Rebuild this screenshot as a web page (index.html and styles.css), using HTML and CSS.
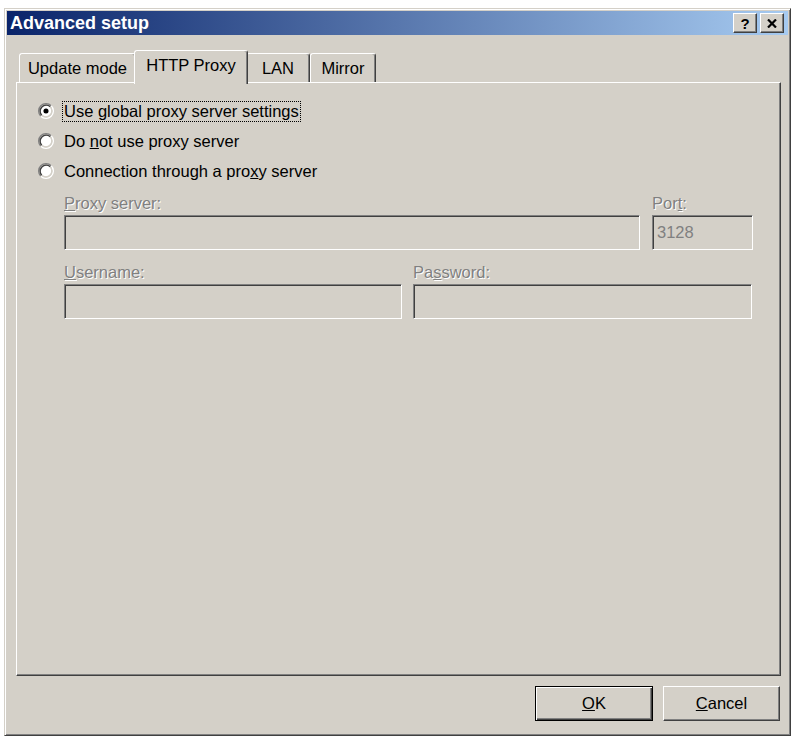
FILE: index.html
```html
<!DOCTYPE html>
<html>
<head>
<meta charset="utf-8">
<title>Advanced setup</title>
<link rel="stylesheet" href="styles.css">
</head>
<body>
<div class="window">
  <div class="titlebar">
    <span class="title">Advanced setup</span>
    <div class="tbtns">
      <span class="tbtn">?</span>
      <span class="tbtn"><svg width="10" height="9" viewBox="0 0 10 9"><path d="M1 0.5 L9 8.5 M9 0.5 L1 8.5" stroke="#000" stroke-width="2.2" fill="none"/></svg></span>
    </div>
  </div>
  <div class="body">
    <div class="tabs">
      <div class="tab t-update">Update mode</div>
      <div class="tab active t-http">HTTP Proxy</div>
      <div class="tab t-lan">LAN</div>
      <div class="tab t-mirror">Mirror</div>
    </div>
    <div class="panel">
      <div class="radio-row">
        <svg class="radio" width="16" height="16" viewBox="0 0 12 12"><circle cx="6" cy="6" r="4.2" fill="#fff"/><path d="M2.11 9.89 A5.5 5.5 0 0 1 9.89 2.11" stroke="#808080" fill="none"/><path d="M9.89 2.11 A5.5 5.5 0 0 1 2.11 9.89" stroke="#fff" fill="none"/><path d="M2.82 9.18 A4.5 4.5 0 0 1 9.18 2.82" stroke="#404040" fill="none"/><path d="M9.18 2.82 A4.5 4.5 0 0 1 2.82 9.18" stroke="#d4d0c8" fill="none"/><circle cx="6" cy="6" r="1.9" fill="#000"/></svg>
        <span class="rlabel focus">Use global proxy server settings</span>
      </div>
      <div class="radio-row">
        <svg class="radio" width="16" height="16" viewBox="0 0 12 12"><circle cx="6" cy="6" r="4.2" fill="#fff"/><path d="M2.11 9.89 A5.5 5.5 0 0 1 9.89 2.11" stroke="#808080" fill="none"/><path d="M9.89 2.11 A5.5 5.5 0 0 1 2.11 9.89" stroke="#fff" fill="none"/><path d="M2.82 9.18 A4.5 4.5 0 0 1 9.18 2.82" stroke="#404040" fill="none"/><path d="M9.18 2.82 A4.5 4.5 0 0 1 2.82 9.18" stroke="#d4d0c8" fill="none"/></svg>
        <span class="rlabel">Do <u>n</u>ot use proxy server</span>
      </div>
      <div class="radio-row">
        <svg class="radio" width="16" height="16" viewBox="0 0 12 12"><circle cx="6" cy="6" r="4.2" fill="#fff"/><path d="M2.11 9.89 A5.5 5.5 0 0 1 9.89 2.11" stroke="#808080" fill="none"/><path d="M9.89 2.11 A5.5 5.5 0 0 1 2.11 9.89" stroke="#fff" fill="none"/><path d="M2.82 9.18 A4.5 4.5 0 0 1 9.18 2.82" stroke="#404040" fill="none"/><path d="M9.18 2.82 A4.5 4.5 0 0 1 2.82 9.18" stroke="#d4d0c8" fill="none"/></svg>
        <span class="rlabel">Connection through a pro<u>x</u>y server</span>
      </div>
      <div class="fields">
        <div class="frow">
          <div class="field w-proxy">
            <div class="flabel"><u>P</u>roxy server:</div>
            <div class="input"></div>
          </div>
          <div class="field w-port">
            <div class="flabel">Por<u>t</u>:</div>
            <div class="input">3128</div>
          </div>
        </div>
        <div class="frow frow2">
          <div class="field w-user">
            <div class="flabel"><u>U</u>sername:</div>
            <div class="input"></div>
          </div>
          <div class="field w-pass">
            <div class="flabel">Pa<u>s</u>sword:</div>
            <div class="input"></div>
          </div>
        </div>
      </div>
    </div>
    <div class="buttons">
      <button class="btn default w-ok"><u>O</u>K</button>
      <button class="btn w-cancel"><u>C</u>ancel</button>
    </div>
  </div>
</div>
</body>
</html>
```

FILE: styles.css
```css
body {
  margin: 0;
  background: #ffffff;
  font-family: "Liberation Sans", Arial, sans-serif;
  font-size: 16.5px;
  color: #000;
}

.window {
  margin: 8px 0 0 4px;
  width: 787px;
  height: 728px;
  box-sizing: border-box;
  background: #d4d0c8;
  border: 1px solid;
  border-color: #d4d0c8 #404040 #404040 #d4d0c8;
  box-shadow: inset 1px 1px 0 #fff, inset -1px -1px 0 #808080;
  padding: 2px;
  display: flex;
  flex-direction: column;
}

.titlebar {
  height: 24px;
  flex: none;
  background: linear-gradient(to right, #0a246a, #a6caf0);
  display: flex;
  align-items: center;
  justify-content: space-between;
  padding: 0 4px 0 3px;
}

.title {
  color: #fff;
  font-weight: bold;
  font-size: 18px;
}

.tbtns {
  display: flex;
  gap: 3px;
}

.tbtn {
  width: 24px;
  height: 20px;
  box-sizing: border-box;
  background: #d4d0c8;
  border: 1px solid;
  border-color: #fff #404040 #404040 #fff;
  box-shadow: inset -1px -1px 0 #808080;
  display: flex;
  align-items: center;
  justify-content: center;
  font-weight: bold;
  font-size: 15px;
  line-height: 1;
}

.body {
  flex: 1;
  padding: 15px 7px 12px 9px;
  display: flex;
  flex-direction: column;
}

.tabs {
  display: flex;
  align-items: flex-end;
  height: 32px;
  padding-left: 3px;
  flex: none;
}

.tab {
  height: 29px;
  box-sizing: border-box;
  border: 1px solid;
  border-bottom: none;
  border-color: #fff #404040 transparent #fff;
  box-shadow: inset -1px 0 0 #808080;
  border-radius: 3px 3px 0 0;
  display: flex;
  align-items: center;
  justify-content: center;
  background: #d4d0c8;
}

.t-update { width: 117px; }
.t-http { width: 114px; }
.t-lan { width: 64px; }
.t-mirror { width: 66px; }

.tab.active {
  height: 34px;
  margin: 0 -2px -2px;
  position: relative;
  z-index: 1;
  align-items: flex-start;
  padding-top: 5px;
}

.panel {
  flex: none;
  height: 594px;
  box-sizing: border-box;
  border: 1px solid;
  border-color: #fff #404040 #404040 #fff;
  box-shadow: inset -1px -1px 0 #808080;
  padding: 13px 0 0 21px;
}

.radio-row {
  height: 30px;
  display: flex;
  align-items: center;
  gap: 8px;
}

.radio {
  flex: none;
}

.rlabel {
  display: inline-block;
  line-height: 19px;
  padding: 0 1px;
  border: 1px solid transparent;
}

.rlabel.focus {
  border: 1px dotted #000;
}

.fields {
  margin: 7px 0 0 26px;
}

.frow {
  display: flex;
  gap: 12px;
}

.frow2 {
  margin-top: 12px;
  gap: 11px;
}

.w-proxy { width: 576px; }
.w-port { width: 101px; }
.w-user { width: 338px; }
.w-pass { width: 339px; }

.flabel {
  height: 22px;
  line-height: 20px;
  color: #808080;
  text-shadow: 1px 1px 0 #fff;
}

.input {
  height: 35px;
  box-sizing: border-box;
  border: 1px solid;
  border-color: #808080 #fff #fff #808080;
  box-shadow: inset 1px 1px 0 #404040, inset -1px -1px 0 #d4d0c8;
  padding-left: 4px;
  line-height: 33px;
  color: #808080;
}

.buttons {
  margin-top: 10px;
  display: flex;
  justify-content: flex-end;
  gap: 10px;
  padding-right: 1px;
}

.btn {
  height: 35px;
  box-sizing: border-box;
  font: inherit;
  color: #000;
  background: #d4d0c8;
  border: 1px solid;
  border-color: #fff #404040 #404040 #fff;
  box-shadow: inset -1px -1px 0 #808080;
  padding: 0;
}

.btn.default {
  border-color: #000;
  box-shadow: inset 1px 1px 0 #fff, inset -1px -1px 0 #404040, inset -2px -2px 0 #808080;
}

.w-ok { width: 118px; }
.w-cancel { width: 117px; }
```
